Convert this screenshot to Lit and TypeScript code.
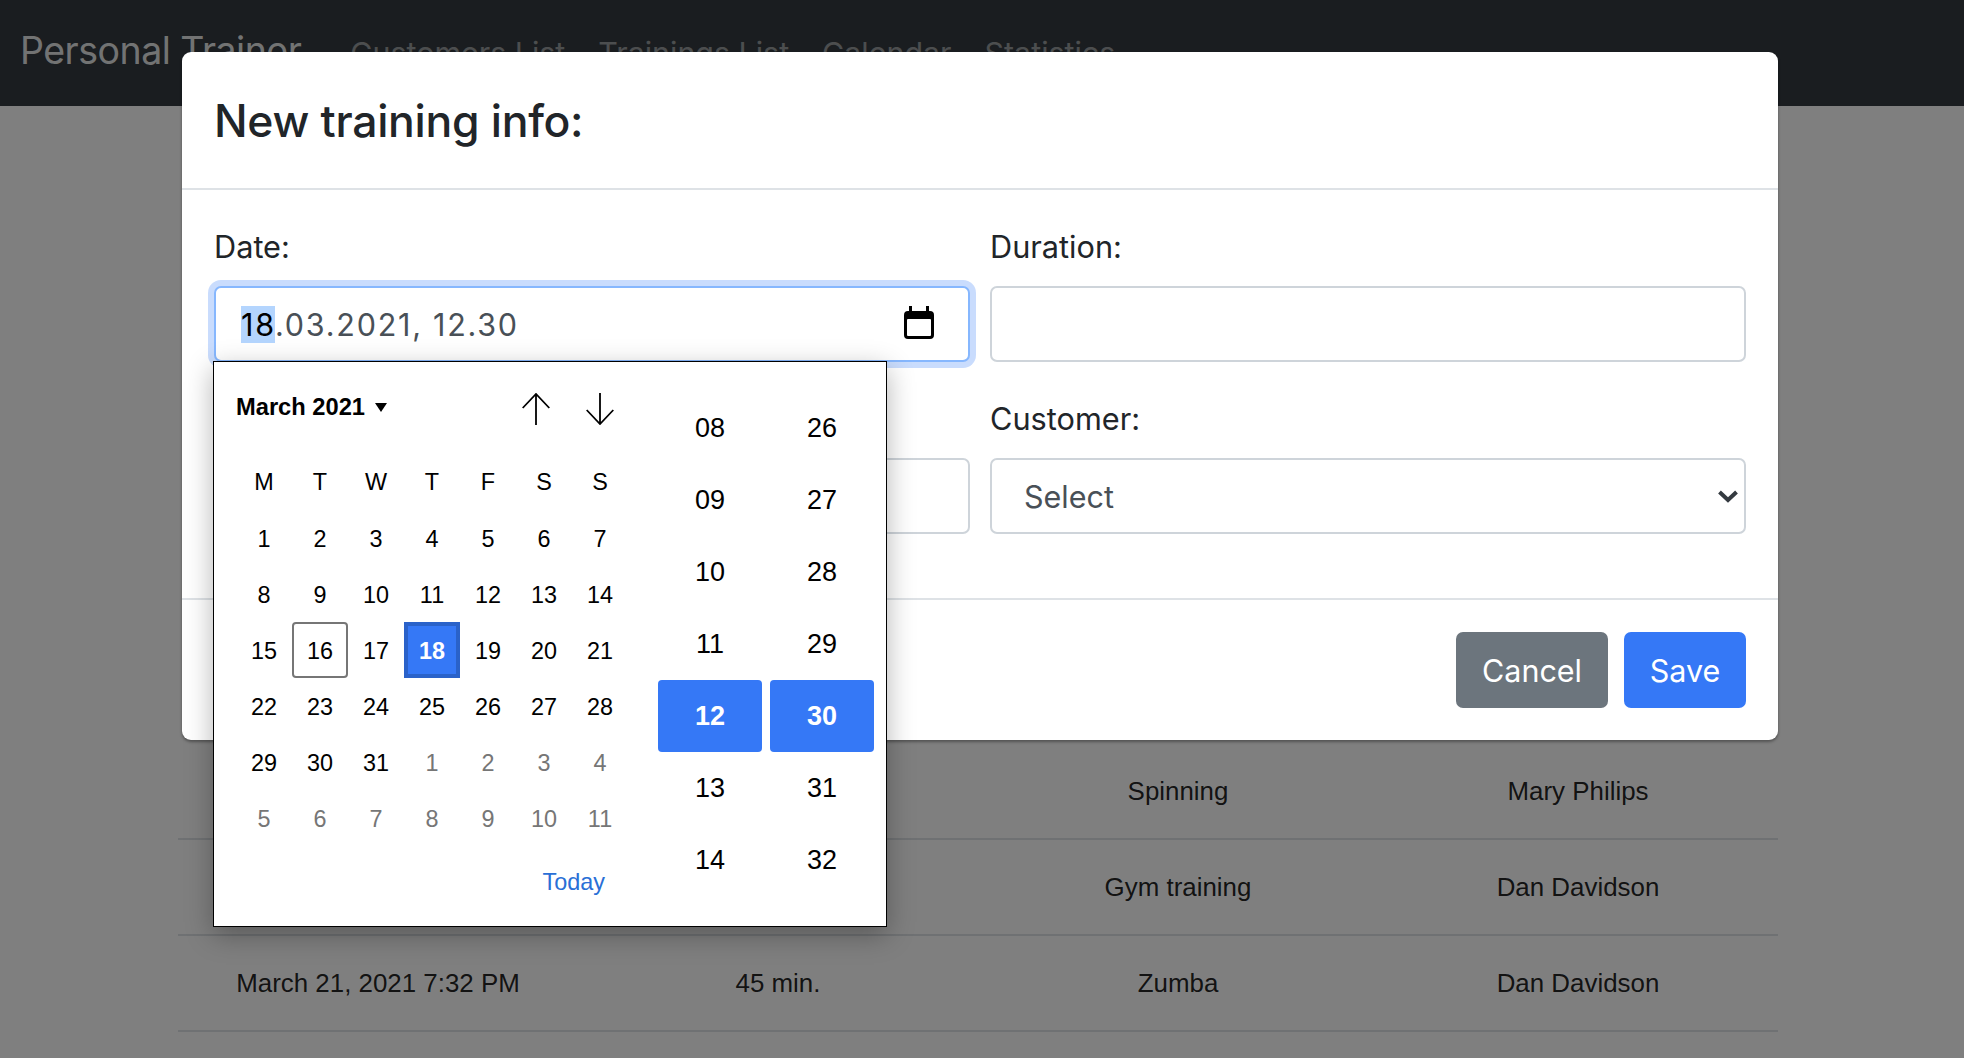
import { LitElement, html, css } from 'lit';
import { customElement } from 'lit/decorators.js';

const WEEKDAYS = ['M', 'T', 'W', 'T', 'F', 'S', 'S'];
const HOURS = ['08', '09', '10', '11', '12', '13', '14'];
const MINUTES = ['26', '27', '28', '29', '30', '31', '32'];

// March 2021 starts on a monday, the grid runs on into april
const DAYS = Array.from({ length: 42 }, (_, i) => ({
  label: i < 31 ? i + 1 : i - 30,
  muted: i >= 31,
}));

const ROWS = [
  { date: '', duration: '', activity: 'Spinning', customer: 'Mary Philips' },
  { date: '', duration: '', activity: 'Gym training', customer: 'Dan Davidson' },
  { date: 'March 21, 2021 7:32 PM', duration: '45 min.', activity: 'Zumba', customer: 'Dan Davidson' },
];

@customElement('app-root')
export class AppRoot extends LitElement {
  static styles = css`
    :host {
      display: block;
      position: relative;
      height: 1058px;
      overflow: hidden;
      background: #fff;
      font-family: Inter, 'Noto Sans', sans-serif;
      color: #212529;
    }

    .navbar {
      display: flex;
      align-items: center;
      height: 106px;
      padding: 0 20px;
      background: #343a40;
      box-sizing: border-box;
    }

    .brand {
      font-size: 37.5px;
      letter-spacing: -0.5px;
      color: rgba(255, 255, 255, 0.9);
      margin-right: 49px;
      margin-top: -6px;
    }

    .nav-links {
      display: flex;
      gap: 33px;
      font-size: 30.4px;
      color: rgba(255, 255, 255, 0.5);
    }

    .content {
      padding: 638px 186px 0 178px;
    }

    .row {
      display: grid;
      grid-template-columns: repeat(4, 1fr);
      height: 96px;
      align-items: center;
      text-align: center;
      box-sizing: border-box;
      border-bottom: 2px solid #dee2e6;
      font-family: 'Liberation Sans', Arial, sans-serif;
      font-size: 25.9px;
      color: rgba(0, 0, 0, 0.87);
    }

    .backdrop {
      position: absolute;
      inset: 0;
      background: rgba(0, 0, 0, 0.5);
    }

    .modal {
      position: absolute;
      top: 52px;
      left: 182px;
      width: 1596px;
      height: 688px;
      box-sizing: border-box;
      background: #fff;
      border-radius: 9px;
      box-shadow: 0 2px 3px rgba(0, 0, 0, 0.35);
    }

    .modal-header {
      height: 138px;
      box-sizing: border-box;
      padding: 2px 32px 0;
      display: flex;
      align-items: center;
      border-bottom: 2px solid #dee2e6;
    }

    h4 {
      margin: 0;
      font-size: 44.5px;
      font-weight: 500;
      letter-spacing: -0.3px;
    }

    .modal-body {
      height: 410px;
      box-sizing: border-box;
      padding: 38px 32px 0;
      display: grid;
      grid-template-columns: 756px 756px;
      grid-auto-rows: 172px;
      column-gap: 20px;
      border-bottom: 2px solid #dee2e6;
    }

    label {
      display: block;
      font-size: 30.7px;
      line-height: 37px;
      margin-bottom: 21px;
    }

    .control {
      height: 76px;
      box-sizing: border-box;
      display: flex;
      align-items: center;
      background: #fff;
      border: 2px solid #ced4da;
      border-radius: 7px;
      font-size: 30.5px;
      color: #495057;
    }

    .control.focused {
      border-color: #86b7fe;
      box-shadow: 0 0 0 6px #c9dcfd;
      padding: 0 34px 0 25px;
      justify-content: space-between;
      letter-spacing: 1.75px;
    }

    .control.focused svg {
      margin-top: -3px;
    }

    .control.select {
      padding: 0 6px 0 32px;
      justify-content: space-between;
    }

    .selected-part {
      background: #b4d5fe;
      color: #000;
    }

    .modal-footer {
      display: flex;
      justify-content: flex-end;
      gap: 16px;
      padding: 32px 32px 0;
    }

    .btn {
      height: 76px;
      box-sizing: border-box;
      display: flex;
      align-items: center;
      justify-content: center;
      color: #fff;
      font-size: 30.5px;
      border-radius: 7px;
    }

    .btn.cancel {
      width: 152px;
      background: #6c757d;
    }

    .btn.save {
      width: 122px;
      background: #3578f6;
    }

    .picker {
      position: absolute;
      left: 213px;
      top: 361px;
      width: 674px;
      height: 566px;
      box-sizing: border-box;
      display: flex;
      background: #fff;
      border: 1px solid #000;
      box-shadow: 0 8px 26px rgba(0, 0, 0, 0.3);
      font-family: 'Liberation Sans', Arial, sans-serif;
      color: #000;
    }

    .calendar {
      width: 444px;
      box-sizing: border-box;
      padding-left: 22px;
    }

    .month-bar {
      display: flex;
      align-items: center;
      justify-content: space-between;
      height: 90px;
      padding-right: 44px;
      margin-bottom: 2px;
    }

    .month {
      display: flex;
      align-items: center;
      gap: 10px;
      font-size: 23.7px;
      font-weight: 700;
    }

    .caret {
      width: 0;
      height: 0;
      border-left: 6.5px solid transparent;
      border-right: 6.5px solid transparent;
      border-top: 9px solid #000;
    }

    .arrows {
      display: flex;
      gap: 36px;
      margin-top: 3px;
    }

    .arrows svg {
      display: block;
    }

    .weekdays,
    .days {
      display: grid;
      grid-template-columns: repeat(7, 56px);
      grid-auto-rows: 56px;
      font-size: 23.4px;
      text-align: center;
    }

    .weekdays span,
    .day {
      display: flex;
      align-items: center;
      justify-content: center;
      box-sizing: border-box;
    }

    .day {
      padding-top: 3px;
    }

    .day.muted {
      color: #767676;
    }

    .day.today {
      border: 2px solid #767676;
      border-radius: 4px;
    }

    .day.current {
      background: #3578f6;
      border: 4px solid #2a62c9;
      color: #fff;
      font-weight: 700;
    }

    .today-link {
      display: flex;
      justify-content: flex-end;
      align-items: center;
      height: 72px;
      padding-right: 53px;
      font-size: 23.4px;
      color: #2a6fd6;
    }

    .times {
      display: grid;
      grid-template-columns: 104px 104px;
      column-gap: 8px;
      grid-auto-rows: 72px;
      padding-top: 30px;
      font-size: 27px;
    }

    .time {
      display: flex;
      align-items: center;
      justify-content: center;
      padding-top: 1px;
    }

    .time.current {
      background: #3578f6;
      border-radius: 4px;
      color: #fff;
      font-weight: 700;
    }
  `;

  render() {
    return html`
      <nav class="navbar">
        <span class="brand">Personal Trainer</span>
        <div class="nav-links">
          <span>Customers List</span>
          <span>Trainings List</span>
          <span>Calendar</span>
          <span>Statistics</span>
        </div>
      </nav>
      <div class="content">
        ${ROWS.map(
          (r) => html`
            <div class="row">
              <span>${r.date}</span>
              <span>${r.duration}</span>
              <span>${r.activity}</span>
              <span>${r.customer}</span>
            </div>
          `
        )}
      </div>
      <div class="backdrop"></div>
      <div class="modal">
        <div class="modal-header"><h4>New training info:</h4></div>
        <div class="modal-body">
          <div>
            <label>Date:</label>
            <div class="control focused">
              <span><span class="selected-part">18</span>.03.2021, 12.30</span>
              ${this.renderCalendarIcon()}
            </div>
          </div>
          <div>
            <label>Duration:</label>
            <div class="control"></div>
          </div>
          <div>
            <label>Activity:</label>
            <div class="control"></div>
          </div>
          <div>
            <label>Customer:</label>
            <div class="control select">
              <span>Select</span>
              <svg width="20" height="14" viewBox="0 0 20 14">
                <path d="M1.5 3l8.5 8 8.5-8" fill="none" stroke="#343a40" stroke-width="4" />
              </svg>
            </div>
          </div>
        </div>
        <div class="modal-footer">
          <div class="btn cancel">Cancel</div>
          <div class="btn save">Save</div>
        </div>
      </div>
      ${this.renderPicker()}
    `;
  }

  private renderCalendarIcon() {
    return html`
      <svg width="30" height="33" viewBox="0 0 30 33">
        <path d="M5 0h3v5h14V0h3v5h1a4 4 0 0 1 4 4v20a4 4 0 0 1-4 4H4a4 4 0 0 1-4-4V9a4 4 0 0 1 4-4h1z" fill="#000" />
        <rect x="3" y="13" width="24" height="17" rx="1" fill="#fff" />
      </svg>
    `;
  }

  private renderPicker() {
    return html`
      <div class="picker">
        <div class="calendar">
          <div class="month-bar">
            <div class="month">March 2021 <span class="caret"></span></div>
            <div class="arrows">
              <svg width="28" height="32" viewBox="0 0 28 32">
                <path d="M14 32V1M0.7 15L14 1l13.3 14" fill="none" stroke="#000" stroke-width="1.8" />
              </svg>
              <svg width="28" height="32" viewBox="0 0 28 32">
                <path d="M14 0v31M0.7 17L14 31l13.3-14" fill="none" stroke="#000" stroke-width="1.8" />
              </svg>
            </div>
          </div>
          <div class="weekdays">${WEEKDAYS.map((d) => html`<span>${d}</span>`)}</div>
          <div class="days">
            ${DAYS.map((d, i) => {
              const cls = d.muted ? 'muted' : i === 15 ? 'today' : i === 17 ? 'current' : '';
              return html`<span class="day ${cls}">${d.label}</span>`;
            })}
          </div>
          <div class="today-link">Today</div>
        </div>
        <div class="times">
          ${HOURS.map(
            (h, i) => html`
              <span class="time ${h === '12' ? 'current' : ''}">${h}</span>
              <span class="time ${MINUTES[i] === '30' ? 'current' : ''}">${MINUTES[i]}</span>
            `
          )}
        </div>
      </div>
    `;
  }
}
